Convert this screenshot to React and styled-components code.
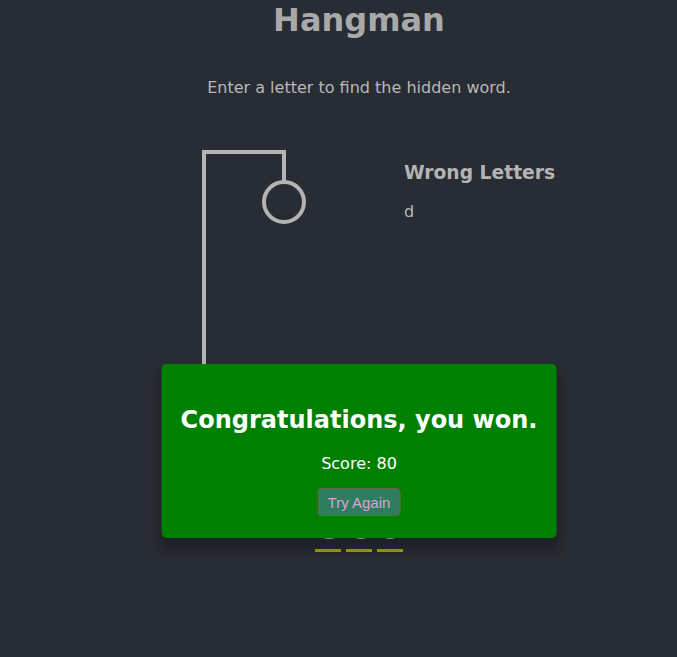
import React from "react";
import styled, { createGlobalStyle } from "styled-components";

// dark page, everything in DejaVu Sans like the original Verdana stack
const GlobalStyle = createGlobalStyle`
  * {
    box-sizing: border-box;
  }
  body {
    margin: 0;
    background-color: #282c34;
    color: #b4b4b4;
    font-family: "DejaVu Sans", Verdana, sans-serif;
  }
`;

const Page = styled.div`
  min-height: 100vh;
  padding-left: 41px;
  display: flex;
  flex-direction: column;
  align-items: center;
`;

const Title = styled.h1`
  margin: 0;
  padding-top: 1px;
  font-size: 32px;
  font-weight: bold;
  color: #a9a9a9;
`;

const Intro = styled.p`
  margin: 39px 0 0;
  font-size: 16px;
  color: #b8b8b8;
`;

const Game = styled.div`
  position: relative;
  width: 450px;
  margin-top: 35px;
`;

const Board = styled.div`
  display: flex;
  align-items: flex-start;
  padding-left: 10px;
`;

const Figure = styled.svg`
  flex: none;
  fill: transparent;
  stroke: #b3b3b3;
  stroke-width: 4px;
`;

const WrongLetters = styled.div`
  margin-left: 60px;
  margin-top: 30px;
  text-align: left;

  h3 {
    margin: 0;
    font-size: 18.72px;
    color: #b4b4b4;
  }

  span {
    display: block;
    margin-top: 19px;
    font-size: 16px;
    color: #b8b8b8;
  }
`;

const Word = styled.div`
  display: flex;
  justify-content: center;
  gap: 5px;
  margin-top: 67px;
`;

const Letter = styled.span`
  display: inline-flex;
  align-items: flex-end;
  justify-content: center;
  width: 26px;
  height: 53px;
  padding-bottom: 3px;
  border-bottom: 3px solid #a8a800;
  font-size: 30px;
  font-weight: bold;
  line-height: 35px;
  color: #b0b0b0;
`;

const Popup = styled.div`
  position: absolute;
  top: 232px;
  left: 50%;
  transform: translateX(-50%);
  padding: 22px 19px 21px;
  background-color: #008000;
  border-radius: 5px;
  box-shadow: 0 10px 12px 3px rgba(0, 0, 0, 0.25);
  text-align: center;
  color: #ffffff;
  white-space: nowrap;

  h2 {
    margin: 20px 0;
    font-size: 24px;
    font-weight: bold;
  }

  p {
    margin: 0 0 15px;
    font-size: 16px;
  }
`;

const Button = styled.button`
  height: 28px;
  padding: 0 9px;
  margin-bottom: 1px;
  background-color: #2e7d5e;
  border: 1px solid #6e5e46;
  border-radius: 4px;
  color: #dda0dd;
  font-family: "Liberation Sans", Arial, sans-serif;
  font-size: 15px;
  cursor: pointer;
`;

const word = ["e", "c", "o"];

function App() {
  return (
    <>
      <GlobalStyle />
      <Page>
        <Title>Hangman</Title>
        <Intro>Enter a letter to find the hidden word.</Intro>
        <Game>
          <Board>
            <Figure width="200" height="300">
              {/* gallows */}
              <path d="M60 280 V20 H140 V50" strokeLinejoin="miter" strokeLinecap="square" />
              <line x1="20" y1="280" x2="100" y2="280" />
              {/* head */}
              <circle cx="140" cy="70" r="20" />
            </Figure>
            <WrongLetters>
              <h3>Wrong Letters</h3>
              <span>d</span>
            </WrongLetters>
          </Board>
          <Word>
            {word.map((l, i) => (
              <Letter key={i}>{l}</Letter>
            ))}
          </Word>
          <Popup>
            <h2>Congratulations, you won.</h2>
            <p>Score: 80</p>
            <Button>Try Again</Button>
          </Popup>
        </Game>
      </Page>
    </>
  );
}

export default App;
